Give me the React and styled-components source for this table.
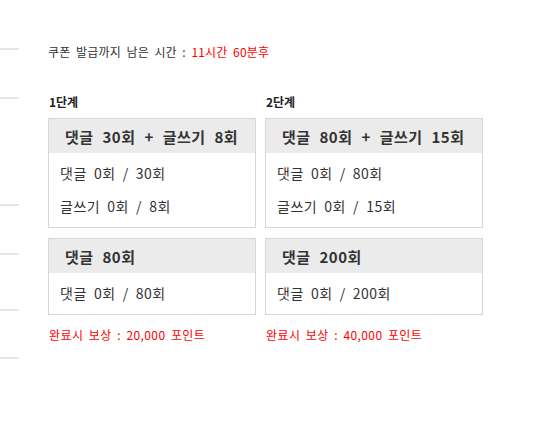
import React from "react";
import styled, { createGlobalStyle } from "styled-components";

const Global = createGlobalStyle`
  html, body { margin: 0; padding: 0; background: #fff; }
  body { font-family: "Noto Sans CJK KR", "Noto Sans", sans-serif; color: #333; }
`;

const Page = styled.div`
  display: flex;
  align-items: flex-start;
  width: 553px;
  height: 427px;
  overflow: hidden;
`;

const Sidebar = styled.nav`
  display: flex;
  flex-direction: column;
  width: 19px;
  flex: none;
`;

const SideItem = styled.div`
  height: ${(p) => p.$h}px;
  border-bottom: 2px solid #e6e6e6;
`;

const Main = styled.main`
  display: flex;
  flex-direction: column;
  padding: 44px 0 0 29px;
`;

const Notice = styled.p`
  margin: 0;
  font-size: 12px;
  line-height: 16px;
  color: #333;
  letter-spacing: 0.2px;
  word-spacing: 2.6px;
`;

const Red = styled.span`
  color: #ff0000;
`;

const Columns = styled.div`
  display: flex;
  gap: 9px;
  margin-top: 34px;
`;

const Column = styled.section`
  display: flex;
  flex-direction: column;
  width: ${(p) => p.$w}px;
`;

const StageTitle = styled.h3`
  margin: 0 0 8px 1px;
  font-size: 12px;
  line-height: 16px;
  font-weight: 700;
  color: #222;
`;

const Box = styled.div`
  border: 1px solid #d6d6d6;
  margin-bottom: ${(p) => (p.$last ? 0 : 10)}px;
`;

const BoxHead = styled.div`
  height: 34px;
  display: flex;
  align-items: center;
  padding-left: 16px;
  background: #ebebeb;
  font-size: 15px;
  font-weight: 700;
  color: #333;
  letter-spacing: 0.5px;
  word-spacing: 5px;
  white-space: nowrap;
`;

const BoxBody = styled.div`
  padding: 3px 0 5px 11px;
`;

const Line = styled.div`
  height: 33px;
  display: flex;
  align-items: center;
  font-size: 14px;
  color: #333;
  letter-spacing: 0.5px;
  word-spacing: 3.5px;
  white-space: nowrap;
`;

const Reward = styled.p`
  margin: 12px 0 0 1px;
  font-size: 12px;
  line-height: 16px;
  color: #ff0000;
  letter-spacing: 0.4px;
  word-spacing: 2.4px;
`;

const sideHeights = [48, 47, 105, 47, 54, 46];

const stages = [
  {
    title: "1단계",
    width: 208,
    boxes: [
      { head: "댓글 30회 + 글쓰기 8회", lines: ["댓글 0회 / 30회", "글쓰기 0회 / 8회"] },
      { head: "댓글 80회", lines: ["댓글 0회 / 80회"] },
    ],
    reward: "완료시 보상 : 20,000 포인트",
  },
  {
    title: "2단계",
    width: 218,
    boxes: [
      { head: "댓글 80회 + 글쓰기 15회", lines: ["댓글 0회 / 80회", "글쓰기 0회 / 15회"] },
      { head: "댓글 200회", lines: ["댓글 0회 / 200회"] },
    ],
    reward: "완료시 보상 : 40,000 포인트",
  },
];

export default function App() {
  return (
    <>
      <Global />
      <Page>
        <Sidebar>
          {sideHeights.map((h, i) => (
            <SideItem key={i} $h={h} />
          ))}
        </Sidebar>
        <Main>
          <Notice>
            쿠폰 발급까지 남은 시간 : <Red>11시간 60분후</Red>
          </Notice>
          <Columns>
            {stages.map((s) => (
              <Column key={s.title} $w={s.width}>
                <StageTitle>{s.title}</StageTitle>
                {s.boxes.map((b, i) => (
                  <Box key={i} $last={i === s.boxes.length - 1}>
                    <BoxHead>{b.head}</BoxHead>
                    <BoxBody>
                      {b.lines.map((l) => (
                        <Line key={l}>{l}</Line>
                      ))}
                    </BoxBody>
                  </Box>
                ))}
                <Reward>{s.reward}</Reward>
              </Column>
            ))}
          </Columns>
        </Main>
      </Page>
    </>
  );
}
